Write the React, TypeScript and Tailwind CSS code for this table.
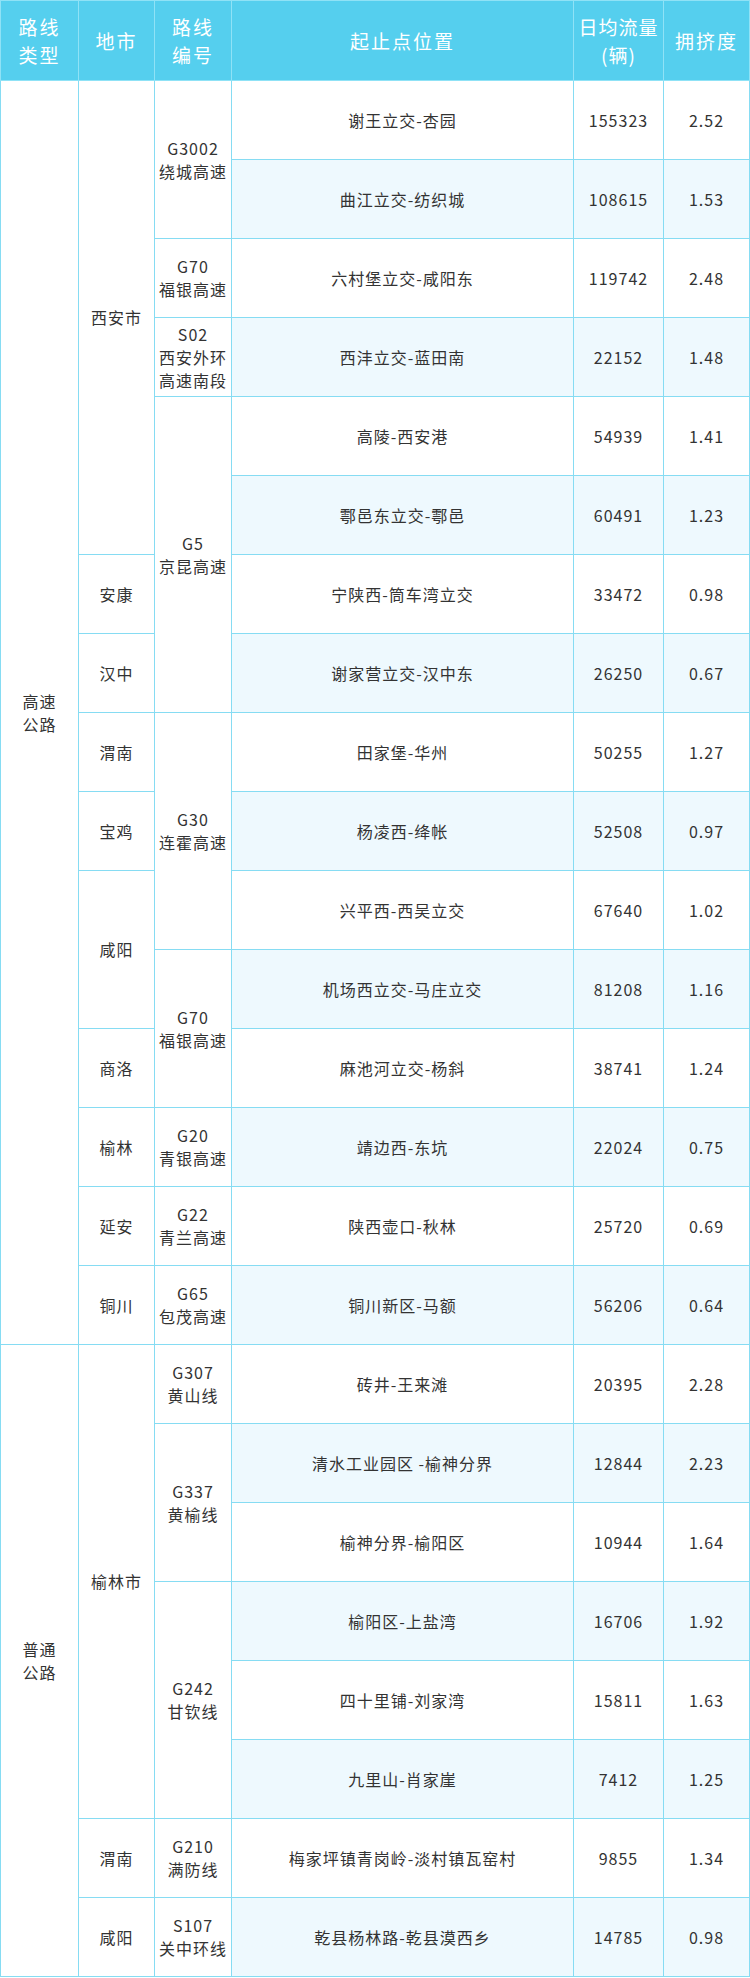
import React from 'react';

type Row = {
  type?: { lines: string[]; span: number };
  city?: { name: string; span: number };
  route?: { lines: string[]; span: number };
  place: string;
  flow: string;
  index: string;
};

const rows: Row[] = [
  {
    type: { lines: ['高速', '公路'], span: 16 },
    city: { name: '西安市', span: 6 },
    route: { lines: ['G3002', '绕城高速'], span: 2 },
    place: '谢王立交-杏园',
    flow: '155323',
    index: '2.52',
  },
  { place: '曲江立交-纺织城', flow: '108615', index: '1.53' },
  {
    route: { lines: ['G70', '福银高速'], span: 1 },
    place: '六村堡立交-咸阳东',
    flow: '119742',
    index: '2.48',
  },
  {
    route: { lines: ['S02', '西安外环', '高速南段'], span: 1 },
    place: '西沣立交-蓝田南',
    flow: '22152',
    index: '1.48',
  },
  {
    route: { lines: ['G5', '京昆高速'], span: 4 },
    place: '高陵-西安港',
    flow: '54939',
    index: '1.41',
  },
  { place: '鄠邑东立交-鄠邑', flow: '60491', index: '1.23' },
  {
    city: { name: '安康', span: 1 },
    place: '宁陕西-筒车湾立交',
    flow: '33472',
    index: '0.98',
  },
  {
    city: { name: '汉中', span: 1 },
    place: '谢家营立交-汉中东',
    flow: '26250',
    index: '0.67',
  },
  {
    city: { name: '渭南', span: 1 },
    route: { lines: ['G30', '连霍高速'], span: 3 },
    place: '田家堡-华州',
    flow: '50255',
    index: '1.27',
  },
  {
    city: { name: '宝鸡', span: 1 },
    place: '杨凌西-绛帐',
    flow: '52508',
    index: '0.97',
  },
  {
    city: { name: '咸阳', span: 2 },
    place: '兴平西-西吴立交',
    flow: '67640',
    index: '1.02',
  },
  {
    route: { lines: ['G70', '福银高速'], span: 2 },
    place: '机场西立交-马庄立交',
    flow: '81208',
    index: '1.16',
  },
  {
    city: { name: '商洛', span: 1 },
    place: '麻池河立交-杨斜',
    flow: '38741',
    index: '1.24',
  },
  {
    city: { name: '榆林', span: 1 },
    route: { lines: ['G20', '青银高速'], span: 1 },
    place: '靖边西-东坑',
    flow: '22024',
    index: '0.75',
  },
  {
    city: { name: '延安', span: 1 },
    route: { lines: ['G22', '青兰高速'], span: 1 },
    place: '陕西壶口-秋林',
    flow: '25720',
    index: '0.69',
  },
  {
    city: { name: '铜川', span: 1 },
    route: { lines: ['G65', '包茂高速'], span: 1 },
    place: '铜川新区-马额',
    flow: '56206',
    index: '0.64',
  },
  {
    type: { lines: ['普通', '公路'], span: 8 },
    city: { name: '榆林市', span: 6 },
    route: { lines: ['G307', '黄山线'], span: 1 },
    place: '砖井-王来滩',
    flow: '20395',
    index: '2.28',
  },
  {
    route: { lines: ['G337', '黄榆线'], span: 2 },
    place: '清水工业园区 -榆神分界',
    flow: '12844',
    index: '2.23',
  },
  { place: '榆神分界-榆阳区', flow: '10944', index: '1.64' },
  {
    route: { lines: ['G242', '甘钦线'], span: 3 },
    place: '榆阳区-上盐湾',
    flow: '16706',
    index: '1.92',
  },
  { place: '四十里铺-刘家湾', flow: '15811', index: '1.63' },
  { place: '九里山-肖家崖', flow: '7412', index: '1.25' },
  {
    city: { name: '渭南', span: 1 },
    route: { lines: ['G210', '满防线'], span: 1 },
    place: '梅家坪镇青岗岭-淡村镇瓦窑村',
    flow: '9855',
    index: '1.34',
  },
  {
    city: { name: '咸阳', span: 1 },
    route: { lines: ['S107', '关中环线'], span: 1 },
    place: '乾县杨林路-乾县漠西乡',
    flow: '14785',
    index: '0.98',
  },
];

const cell = 'border border-[#86dcf3] text-center align-middle p-0';

export default function App() {
  return (
    <div className="w-[750px] bg-white font-['Noto_Sans_CJK_SC','Noto_Sans',sans-serif]">
      <table className="w-[750px] table-fixed border-collapse">
        <colgroup>
          <col className="w-[78px]" />
          <col className="w-[76px]" />
          <col className="w-[77px]" />
          <col className="w-[342px]" />
          <col className="w-[90px]" />
          <col />
        </colgroup>
        <thead>
          <tr className="h-[80px] bg-[#55cfee] text-[19px] leading-[28px] tracking-[2px] text-white">
            <th className="border border-[#8fe2f6] font-normal">
              路线
              <br />
              类型
            </th>
            <th className="border border-[#8fe2f6] font-normal">地市</th>
            <th className="border border-[#8fe2f6] font-normal">
              路线
              <br />
              编号
            </th>
            <th className="border border-[#8fe2f6] font-normal">起止点位置</th>
            <th className="border border-[#8fe2f6] font-normal tracking-[1px]">
              日均流量
              <br />
              (辆)
            </th>
            <th className="border border-[#8fe2f6] font-normal">拥挤度</th>
          </tr>
        </thead>
        <tbody className="text-[16px] leading-[23px] tracking-[1px] text-[#333]">
          {rows.map((r, i) => {
            const tint = i % 2 === 1 ? 'bg-[#eef9fe]' : 'bg-white';
            return (
              <tr key={i} className="h-[79px]">
                {r.type && (
                  <td rowSpan={r.type.span} className={`${cell} bg-white`}>
                    {r.type.lines.map((l) => (
                      <div key={l}>{l}</div>
                    ))}
                  </td>
                )}
                {r.city && (
                  <td rowSpan={r.city.span} className={`${cell} bg-white`}>
                    {r.city.name}
                  </td>
                )}
                {r.route && (
                  <td rowSpan={r.route.span} className={`${cell} bg-white`}>
                    {r.route.lines.map((l) => (
                      <div key={l}>{l}</div>
                    ))}
                  </td>
                )}
                <td className={`${cell} ${tint}`}>{r.place}</td>
                <td className={`${cell} ${tint}`}>{r.flow}</td>
                <td className={`${cell} ${tint}`}>{r.index}</td>
              </tr>
            );
          })}
        </tbody>
      </table>
    </div>
  );
}
